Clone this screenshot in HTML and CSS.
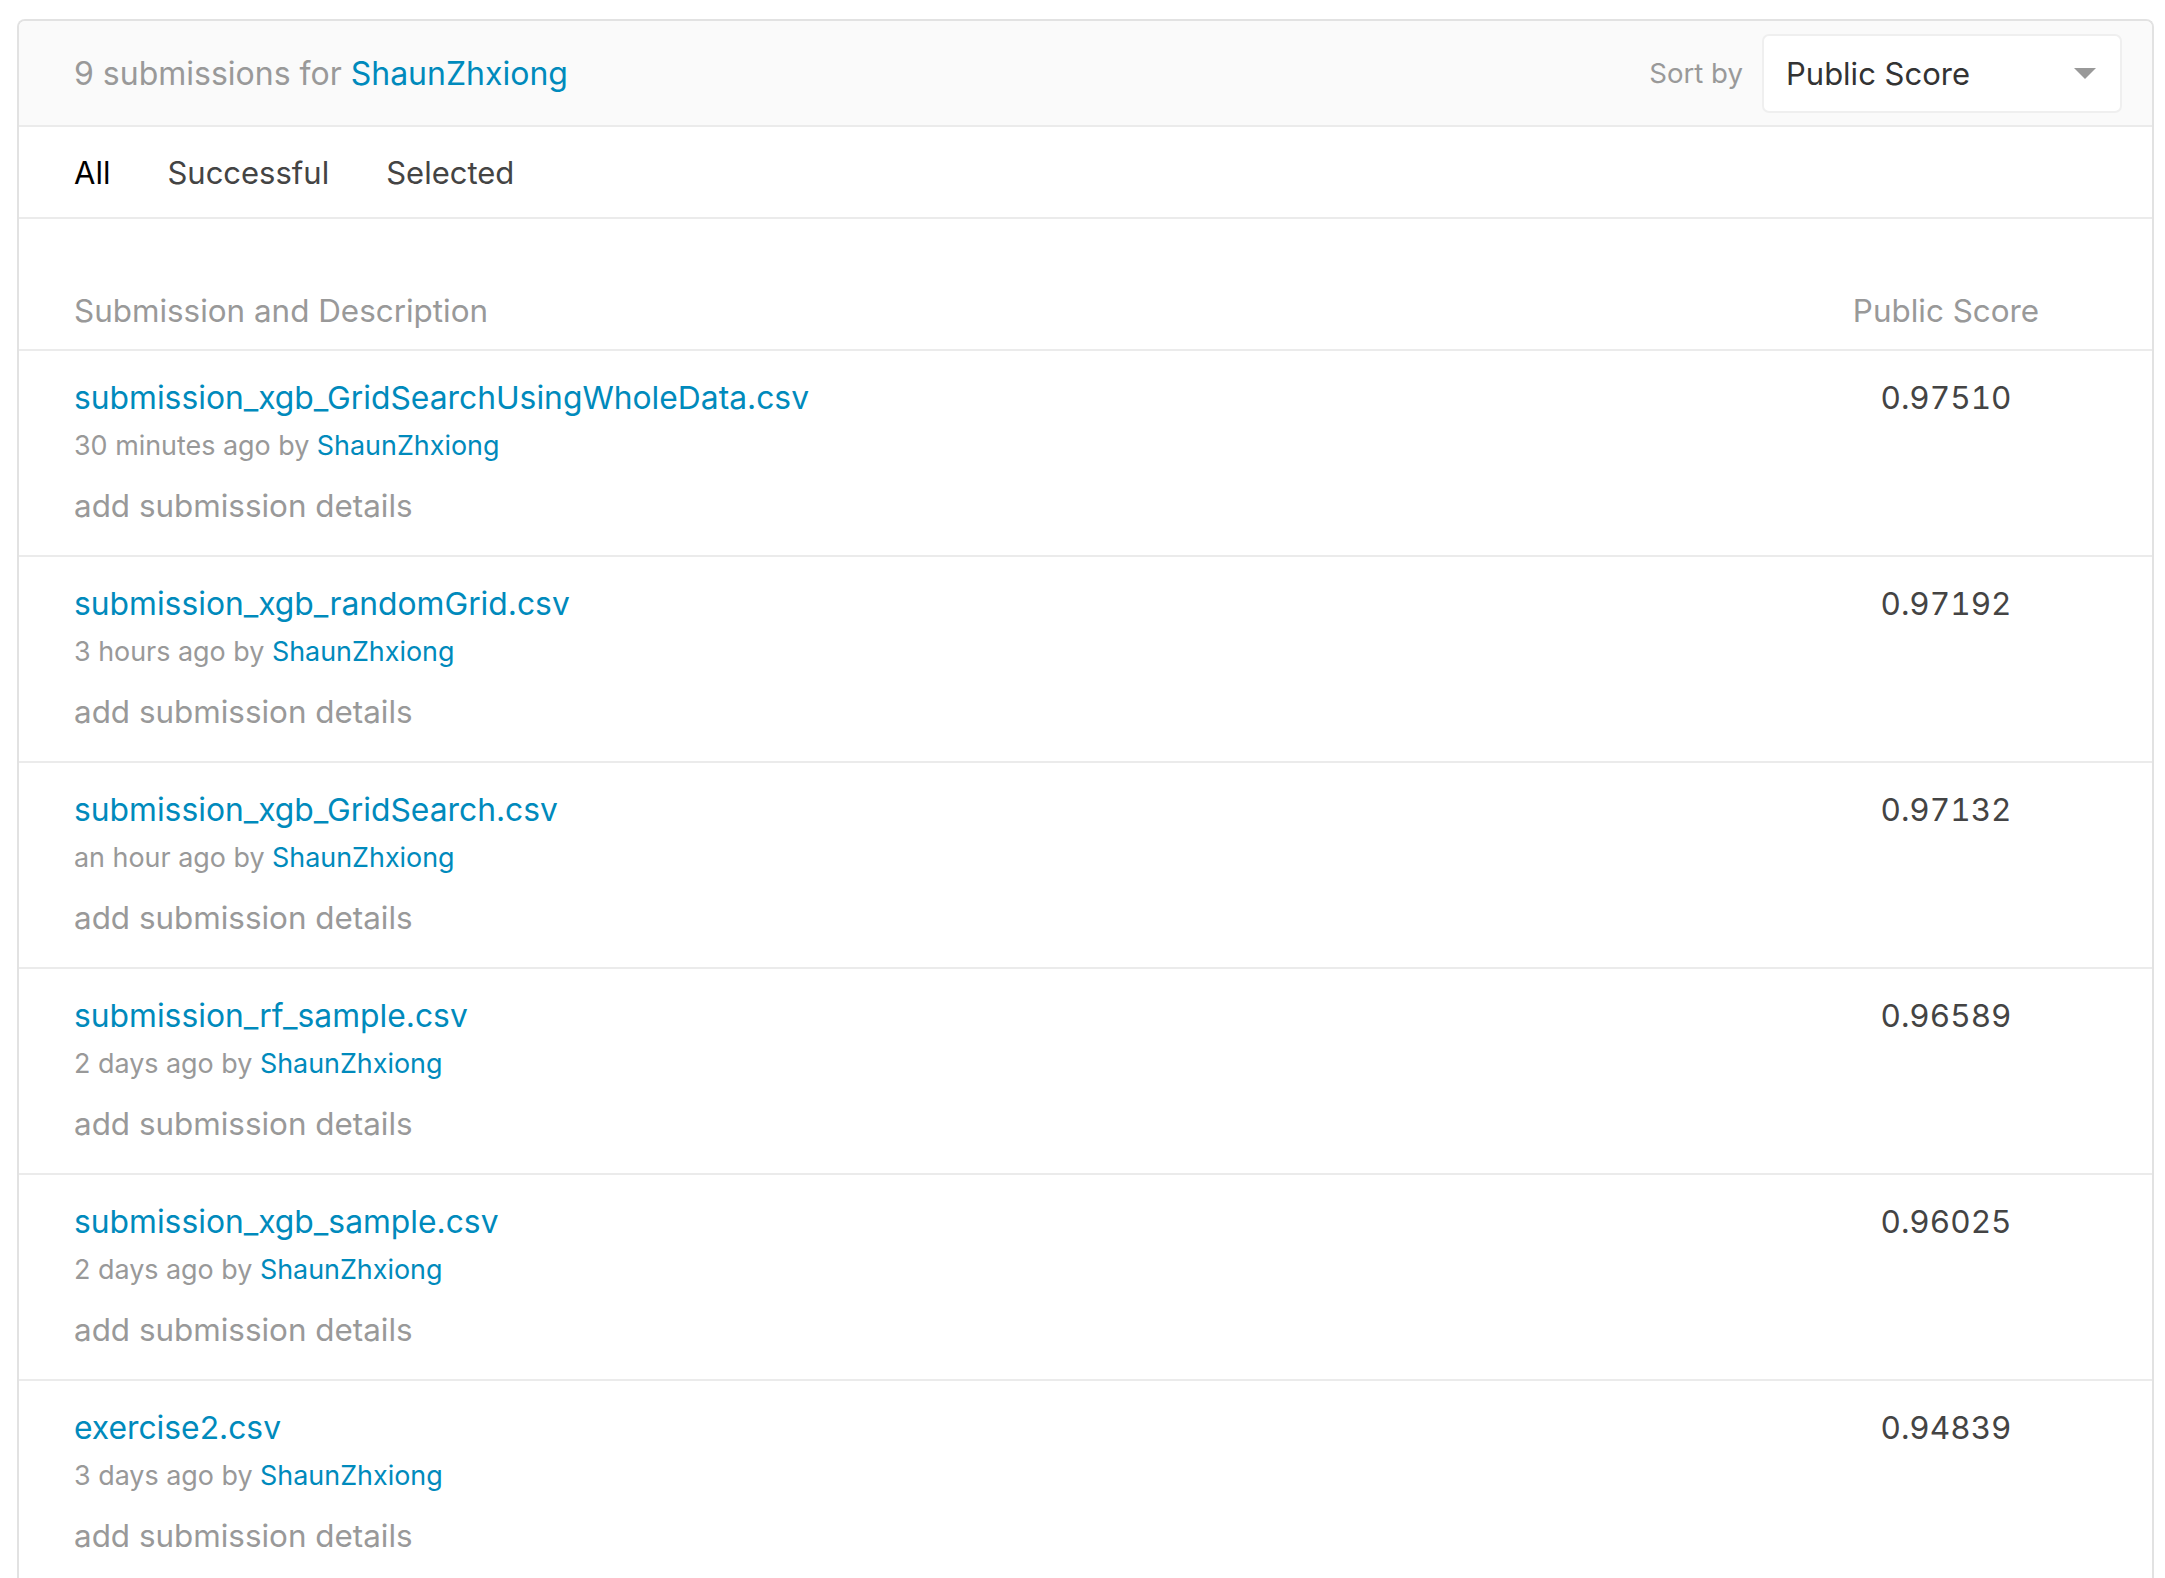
FILE: index.html
```html
<!DOCTYPE html>
<html lang="en">
<head>
<meta charset="utf-8">
<title>Submissions</title>
<link rel="stylesheet" href="styles.css">
</head>
<body>
<div class="card">
  <div class="card-header">
    <div class="count">9 submissions for <a class="link" href="#">ShaunZhxiong</a></div>
    <div class="sort">
      <span class="sort-label">Sort by</span>
      <div class="select">
        <span class="select-value">Public Score</span>
        <span class="caret"></span>
      </div>
    </div>
  </div>
  <div class="tabs">
    <span class="tab active">All</span>
    <span class="tab">Successful</span>
    <span class="tab">Selected</span>
  </div>
  <div class="colhead">
    <div class="col-main">Submission and Description</div>
    <div class="col-score">Public Score</div>
  </div>
  <div class="row">
    <div class="col-main">
      <a class="title link" href="#">submission_xgb_GridSearchUsingWholeData.csv</a>
      <div class="meta">30 minutes ago by <a class="link" href="#">ShaunZhxiong</a></div>
      <div class="details">add submission details</div>
    </div>
    <div class="col-score score">0.97510</div>
  </div>
  <div class="row">
    <div class="col-main">
      <a class="title link" href="#">submission_xgb_randomGrid.csv</a>
      <div class="meta">3 hours ago by <a class="link" href="#">ShaunZhxiong</a></div>
      <div class="details">add submission details</div>
    </div>
    <div class="col-score score">0.97192</div>
  </div>
  <div class="row">
    <div class="col-main">
      <a class="title link" href="#">submission_xgb_GridSearch.csv</a>
      <div class="meta">an hour ago by <a class="link" href="#">ShaunZhxiong</a></div>
      <div class="details">add submission details</div>
    </div>
    <div class="col-score score">0.97132</div>
  </div>
  <div class="row">
    <div class="col-main">
      <a class="title link" href="#">submission_rf_sample.csv</a>
      <div class="meta">2 days ago by <a class="link" href="#">ShaunZhxiong</a></div>
      <div class="details">add submission details</div>
    </div>
    <div class="col-score score">0.96589</div>
  </div>
  <div class="row">
    <div class="col-main">
      <a class="title link" href="#">submission_xgb_sample.csv</a>
      <div class="meta">2 days ago by <a class="link" href="#">ShaunZhxiong</a></div>
      <div class="details">add submission details</div>
    </div>
    <div class="col-score score">0.96025</div>
  </div>
  <div class="row">
    <div class="col-main">
      <a class="title link" href="#">exercise2.csv</a>
      <div class="meta">3 days ago by <a class="link" href="#">ShaunZhxiong</a></div>
      <div class="details">add submission details</div>
    </div>
    <div class="col-score score">0.94839</div>
  </div>
</div>
</body>
</html>
```

FILE: styles.css
```css
html, body {
  margin: 0;
  padding: 0;
  background: #ffffff;
  overflow: hidden;
}
body {
  font-family: Inter, "Noto Sans", sans-serif;
  color: #444;
}
.card {
  margin: 19px 11px 0 17px;
  border: 2px solid #e2e2e2;
  border-bottom: none;
  border-radius: 8px 8px 0 0;
  background: #fff;
}
.link {
  color: #008abc;
  text-decoration: none;
}
.card-header {
  display: flex;
  align-items: center;
  justify-content: space-between;
  height: 104px;
  padding: 0 30px 0 55px;
  background: #fafafa;
  border-bottom: 2px solid #ebebeb;
  border-radius: 6px 6px 0 0;
}
.count {
  font-size: 32px;
  color: #999;
}
.sort {
  display: flex;
  align-items: center;
  gap: 19px;
}
.sort-label {
  font-size: 27.6px;
  color: #999;
}
.select {
  display: flex;
  align-items: center;
  justify-content: space-between;
  box-sizing: border-box;
  width: 360px;
  height: 79px;
  padding: 0 24px 0 22px;
  background: #fff;
  border: 2px solid #efefef;
  border-radius: 7px;
}
.select-value {
  font-size: 31px;
  color: #333;
}
.caret {
  width: 0;
  height: 0;
  border-left: 11px solid transparent;
  border-right: 11px solid transparent;
  border-top: 11px solid #999;
}
.tabs {
  display: flex;
  align-items: center;
  gap: 57px;
  height: 90px;
  padding-left: 55px;
  border-bottom: 2px solid #ebebeb;
}
.tab {
  font-size: 31px;
  color: #444;
}
.tab.active {
  color: #000;
}
.colhead {
  display: flex;
  align-items: flex-start;
  padding: 72px 0 18px 55px;
  border-bottom: 2px solid #ebebeb;
  font-size: 31.4px;
  line-height: 40px;
  color: #999;
}
.col-main {
  flex: 1;
  min-width: 0;
}
.col-score {
  width: 300px;
  margin-right: 56px;
  text-align: center;
}
.row {
  display: flex;
  align-items: flex-start;
  padding: 27px 0 29px 55px;
  border-bottom: 2px solid #ebebeb;
}
.title {
  display: block;
  font-size: 31.8px;
  line-height: 40px;
}
.meta {
  margin-top: 9px;
  font-size: 26.9px;
  line-height: 36px;
  color: #999;
}
.details {
  margin-top: 23px;
  font-size: 31.4px;
  line-height: 40px;
  color: #999;
}
.score {
  font-size: 31.5px;
  line-height: 40px;
  font-variant-numeric: tabular-nums;
  color: #444;
}
```
